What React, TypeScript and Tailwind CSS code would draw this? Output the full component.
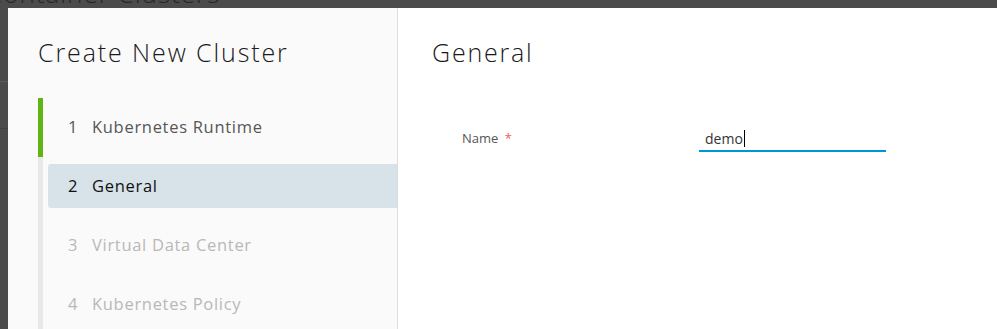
export default function App() {
  const steps = [
    { n: 1, label: "Kubernetes Runtime", state: "done" },
    { n: 2, label: "General", state: "active" },
    { n: 3, label: "Virtual Data Center", state: "todo" },
    { n: 4, label: "Kubernetes Policy", state: "todo" },
  ];

  return (
    <div
      className="relative h-[329px] w-[997px] overflow-hidden bg-[#4b4b4b]"
      style={{ fontFamily: "'Open Sans', Lato, sans-serif" }}
    >
      {/* page behind the modal */}
      <div className="absolute inset-0">
        <div className="-ml-[14px] mt-[-22px] text-[26px] font-light leading-[30px] tracking-[1px] text-[#262626]">
          Container Clusters
        </div>
        <div className="mt-[73px] h-px bg-[#5a5a5a]" />
        <div className="mt-[46px] h-px bg-[#424242]" />
      </div>

      {/* modal */}
      <div className="relative ml-2 mt-2 flex h-[321px] bg-white">
        <div className="w-[390px] shrink-0 border-r border-[#dddddd] bg-[#fafafa]">
          <h1 className="pl-[30px] pt-[27px] text-[25px] font-light leading-[34px] tracking-[1.9px] text-[#1a1a1a]">
            Create New Cluster
          </h1>
          <div className="ml-[30px] mt-[29px] flex flex-col">
            {steps.map((s, i) => (
              <div key={s.n} className="flex">
                <div
                  className={
                    "h-[59px] w-[5px] shrink-0 " +
                    (i === 0 ? "bg-[#60b515]" : "bg-[#e8e8e8]")
                  }
                />
                <div className="flex-1 pl-[5px] pt-[7px]">
                  <div
                    className={
                      "flex h-[44px] items-center rounded-l-[3px] pl-5 text-[16.5px] tracking-[0.7px] " +
                      (s.state === "active"
                        ? "bg-[#d8e3e9] text-[#111111]"
                        : s.state === "done"
                        ? "text-[#565656]"
                        : "text-[#b8b8b8]")
                    }
                  >
                    <span className="w-6">{s.n}</span>
                    <span>{s.label}</span>
                  </div>
                </div>
              </div>
            ))}
          </div>
        </div>

        <div className="flex-1">
          <h2 className="pl-[34px] pt-[27px] text-[25px] font-light leading-[34px] tracking-[1.8px] text-[#1a1a1a]">
            General
          </h2>
          <div className="mt-[57px] flex items-center pl-[64px]">
            <label className="w-[237px] text-[13px] text-[#565656]">
              Name <span className="ml-[3px] text-[#f25c5c]">*</span>
            </label>
            <div className="flex h-[26px] w-[187px] items-center border-b-2 border-[#0095d3] pl-[6px] text-[14px] text-[#333333]">
              demo
              <span className="ml-px inline-block h-[17px] w-px bg-black" />
            </div>
          </div>
        </div>
      </div>
    </div>
  );
}
